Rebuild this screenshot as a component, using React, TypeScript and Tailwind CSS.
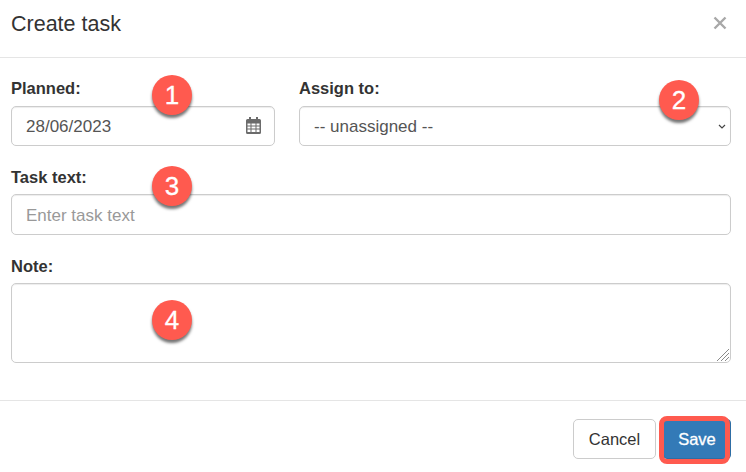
function Badge({ n, className }: { n: number; className: string }) {
  return (
    <div
      className={`absolute flex h-10 w-10 items-center justify-center rounded-full bg-[#ff5a4f] text-[26px] leading-none text-white shadow-[0_3px_3px_rgba(0,0,0,0.55)] [-webkit-text-stroke:0.3px_white] ${className}`}
    >
      {n}
    </div>
  );
}

const fieldClass =
  "w-full rounded-[5px] border border-[#ccc] bg-white px-[14px] pt-[2px] text-[17px] text-[#555] shadow-[inset_0_1px_1px_rgba(0,0,0,0.075)] outline-none";

export default function App() {
  return (
    <div className="relative h-[472px] w-[746px] overflow-hidden bg-white font-['Liberation_Sans',Arial,sans-serif] text-[#333]">
      <header className="flex h-[58px] items-center justify-between border-b border-[#e5e5e5] pb-[8px] pl-[11px] pr-[19px]">
        <h1 className="text-[21.5px] leading-none">Create task</h1>
        <svg width="14" height="14" viewBox="0 0 14 14" className="mb-[3px]">
          <path d="M1.5 1.5 12.5 12.5M12.5 1.5 1.5 12.5" stroke="#a8a8a8" strokeWidth="2.4" />
        </svg>
      </header>

      <form className="flex h-[343px] flex-col border-b border-[#e5e5e5] pl-[11px] pr-[15px] pt-[20px]">
        <div className="flex gap-6">
          <div className="w-[264px] shrink-0">
            <label className="mb-[8px] block text-[16.5px] leading-5 font-bold">Planned:</label>
            <div className="relative">
              <input className={`${fieldClass} h-10`} defaultValue="28/06/2023" />
              <svg
                width="15"
                height="17"
                viewBox="0 0 15 17"
                className="absolute right-[14px] top-[11px]"
              >
                <path
                  fillRule="evenodd"
                  fill="#6b6b6b"
                  d="M3 0h2v2h5V0h2v2h1.500A1.500 1.500 0 0 1 15 3.500v12a1.500 1.500 0 0 1-1.500 1.500h-12A1.500 1.500 0 0 1 0 15.500v-12A1.500 1.500 0 0 1 1.500 2H3zM1.500 6.500v2h3v-2zm4 0v2h4v-2zm5 0v2h3v-2zm-9 3v2h3v-2zm4 0v2h4v-2zm5 0v2h3v-2zm-9 3v2.500h3v-2.500zm4 0v2.500h4v-2.500zm5 0v2.500h3v-2.500z"
                />
              </svg>
            </div>
          </div>
          <div className="min-w-0 flex-1">
            <label className="mb-[8px] block text-[16.5px] leading-5 font-bold">Assign to:</label>
            <div className="relative">
              <select className={`${fieldClass} h-10 appearance-none`} defaultValue="">
                <option value="">-- unassigned --</option>
              </select>
              <svg
                width="8"
                height="5"
                viewBox="0 0 8 5"
                className="absolute right-[5px] top-[18px]"
              >
                <path d="M1 1l3 3 3-3" fill="none" stroke="#444" strokeWidth="1.200" />
              </svg>
            </div>
          </div>
        </div>

        <label className="mb-[7px] mt-[21px] block text-[16.5px] leading-5 font-bold">Task text:</label>
        <input className={`${fieldClass} h-[41px] placeholder:text-[#999]`} placeholder="Enter task text" />

        <label className="mb-[7px] mt-[21px] block text-[16.5px] leading-5 font-bold">Note:</label>
        <div className="relative">
          <textarea className={`${fieldClass} block h-20 resize-none`} />
          <svg width="14" height="14" viewBox="0 0 14 14" className="absolute bottom-[1px] right-[1px]">
            <path
              d="M1 13 13 1M5 13 13 5M9 13 13 9"
              stroke="#8a8a8a"
              strokeWidth="1"
              fill="none"
            />
          </svg>
        </div>
      </form>

      <footer className="flex items-start justify-end gap-[7px] pr-[15px] pt-[18px]">
        <button className="h-10 w-[83px] rounded-[5px] border border-[#ccc] bg-white text-[16.5px] text-[#333]">
          Cancel
        </button>
        <button className="relative h-10 w-[68px] rounded-[4px] border border-[#2e6da4] bg-[#337ab7] text-[16.5px] text-white [-webkit-text-stroke:0.3px_white]">
          Save
          <span className="absolute -bottom-[6px] -left-[5px] -right-0 -top-[4px] rounded-[8px] border-[5px] border-[#ff5a4f]" />
        </button>
      </footer>

      <Badge n={1} className="left-[152px] top-[75px]" />
      <Badge n={2} className="left-[659px] top-[80px]" />
      <Badge n={3} className="left-[152px] top-[166px]" />
      <Badge n={4} className="left-[152px] top-[300px]" />
    </div>
  );
}
